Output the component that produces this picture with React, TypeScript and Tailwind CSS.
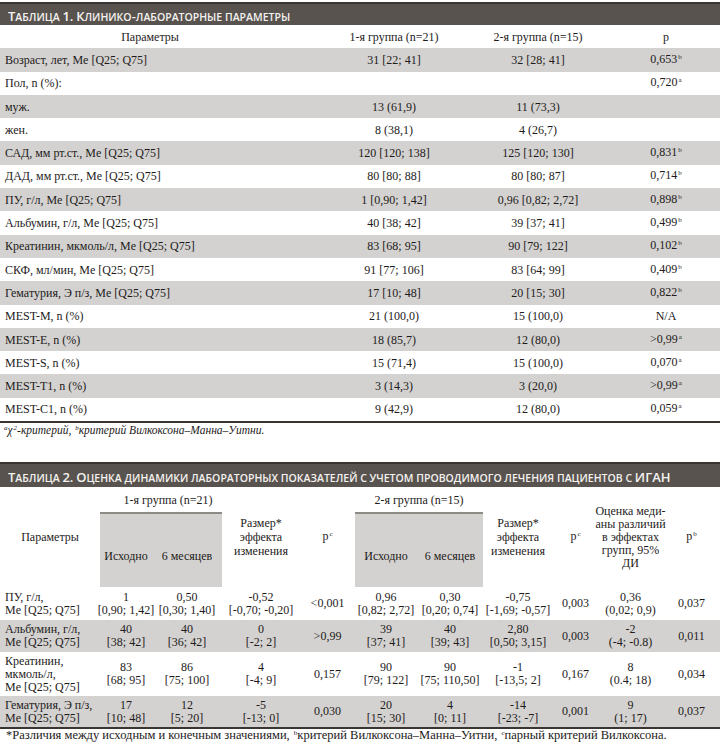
import React from "react";

const serif = "font-['Liberation_Serif',_'Times_New_Roman',serif]";

function SmallCaps({ text }: { text: string }) {
  const parts: { big: boolean; s: string }[] = [];
  for (const ch of text) {
    const isLower = ch !== ch.toUpperCase();
    const big = !isLower && ch !== " ";
    const last = parts[parts.length - 1];
    if (last && last.big === big) last.s += ch;
    else parts.push({ big, s: ch });
  }
  return (
    <span>
      {parts.map((p, i) =>
        p.big ? (
          <span key={i} className="text-[13px]">{p.s}</span>
        ) : (
          <span key={i} className="text-[10.5px]">{p.s.toUpperCase()}</span>
        )
      )}
    </span>
  );
}

function TitleBar({ text, h }: { text: string; h: string }) {
  return (
    <div className={`${h} bg-[#58534e] border-t-[2px] border-[#3a3531] flex items-center pl-[8px] text-[#f4f2f0] font-['Open_Sans',sans-serif] font-semibold tracking-[0px] leading-none whitespace-pre`}>
      <SmallCaps text={text} />
    </div>
  );
}

const Sup = ({ c }: { c: string }) => (
  <span className="text-[7px] relative top-[-4px] ml-[1px]">{c}</span>
);

type Row1 = [string, string, string, string, string?];
const rows1: Row1[] = [
  ["Возраст, лет, Me [Q25; Q75]", "31 [22; 41]", "32 [28; 41]", "0,653", "b"],
  ["Пол, n (%):", "", "", "0,720", "a"],
  ["муж.", "13 (61,9)", "11 (73,3)", ""],
  ["жен.", "8 (38,1)", "4 (26,7)", ""],
  ["САД, мм рт.ст., Me [Q25; Q75]", "120 [120; 138]", "125 [120; 130]", "0,831", "b"],
  ["ДАД, мм рт.ст., Me [Q25; Q75]", "80 [80; 88]", "80 [80; 87]", "0,714", "b"],
  ["ПУ, г/л, Me [Q25; Q75]", "1 [0,90; 1,42]", "0,96 [0,82; 2,72]", "0,898", "b"],
  ["Альбумин, г/л, Me [Q25; Q75]", "40 [38; 42]", "39 [37; 41]", "0,499", "b"],
  ["Креатинин, мкмоль/л, Me [Q25; Q75]", "83 [68; 95]", "90 [79; 122]", "0,102", "b"],
  ["СКФ, мл/мин, Me [Q25; Q75]", "91 [77; 106]", "83 [64; 99]", "0,409", "b"],
  ["Гематурия, Э п/з, Me [Q25; Q75]", "17 [10; 48]", "20 [15; 30]", "0,822", "b"],
  ["MEST-M, n (%)", "21 (100,0)", "15 (100,0)", "N/A"],
  ["MEST-E, n (%)", "18 (85,7)", "12 (80,0)", ">0,99", "a"],
  ["MEST-S, n (%)", "15 (71,4)", "15 (100,0)", "0,070", "a"],
  ["MEST-T1, n (%)", "3 (14,3)", "3 (20,0)", ">0,99", "a"],
  ["MEST-C1, n (%)", "9 (42,9)", "12 (80,0)", "0,059", "a"],
];

type Row2 = { label: string[]; cells: [string, string][]; h: string; gray: boolean };
const rows2: Row2[] = [
  {
    label: ["ПУ, г/л,", "Me [Q25; Q75]"],
    cells: [
      ["1", "[0,90; 1,42]"],
      ["0,50", "[0,30; 1,40]"],
      ["-0,52", "[-0,70; -0,20]"],
      ["<0,001", ""],
      ["0,96", "[0,82; 2,72]"],
      ["0,30", "[0,20; 0,74]"],
      ["-0,75", "[-1,69; -0,57]"],
      ["0,003", ""],
      ["0,36", "(0,02; 0,9)"],
      ["0,037", ""],
    ],
    h: "h-[33px]",
    gray: false,
  },
  {
    label: ["Альбумин, г/л,", "Me [Q25; Q75]"],
    cells: [
      ["40", "[38; 42]"],
      ["40", "[36; 42]"],
      ["0", "[-2; 2]"],
      [">0,99", ""],
      ["39", "[37; 41]"],
      ["40", "[39; 43]"],
      ["2,80", "[0,50; 3,15]"],
      ["0,003", ""],
      ["-2", "(-4; -0.8)"],
      ["0,011", ""],
    ],
    h: "h-[32px]",
    gray: true,
  },
  {
    label: ["Креатинин,", "мкмоль/л,", "Me [Q25; Q75]"],
    cells: [
      ["83", "[68; 95]"],
      ["86", "[75; 100]"],
      ["4", "[-4; 9]"],
      ["0,157", ""],
      ["90", "[79; 122]"],
      ["90", "[75; 110,50]"],
      ["-1", "[-13,5; 2]"],
      ["0,167", ""],
      ["8", "(0.4; 18)"],
      ["0,034", ""],
    ],
    h: "h-[44px]",
    gray: false,
  },
  {
    label: ["Гематурия, Э п/з,", "Me [Q25; Q75]"],
    cells: [
      ["17", "[10; 48]"],
      ["12", "[5; 20]"],
      ["-5", "[-13; 0]"],
      ["0,030", ""],
      ["20", "[15; 30]"],
      ["4", "[0; 11]"],
      ["-14", "[-23; -7]"],
      ["0,001", ""],
      ["9", "(1; 17)"],
      ["0,037", ""],
    ],
    h: "h-[31px]",
    gray: true,
  },
];

const cols2 = "grid grid-cols-[100px_52px_70px_78px_55px_62px_66px_70px_45px_65px_57px]";

export default function App() {
  return (
    <div className={`w-[720px] h-[744px] bg-white overflow-hidden text-[#1e1b1a] ${serif}`}>
      {/* Table 1 */}
      <div className="pt-[2px]">
        <TitleBar h="h-[23px]" text="Таблица 1. Клинико-лабораторные параметры" />
        <div className="text-[12px] leading-[14px]">
          <div className="grid grid-cols-[300px_188px_100px_132px] h-[23.3px] items-center">
            <div className="text-center">Параметры</div>
            <div className="text-center">1-я группа (n=21)</div>
            <div className="text-center">2-я группа (n=15)</div>
            <div className="text-center pl-[24px]">p</div>
          </div>
          {rows1.map((r, i) => (
            <div
              key={i}
              className={`grid grid-cols-[300px_188px_100px_132px] h-[23.3px] items-center ${i % 2 === 0 ? "bg-[#d3d2d0]" : ""}`}
            >
              <div className="pl-[5px] whitespace-nowrap">{r[0]}</div>
              <div className="text-center">{r[1]}</div>
              <div className="text-center">{r[2]}</div>
              <div className="text-center pl-[24px]">
                {r[3]}
                {r[4] ? <Sup c={r[4]} /> : null}
              </div>
            </div>
          ))}
          <div className="h-[2px] bg-[#3a3531]" />
        </div>
        <div className="h-[15px] flex items-center pl-[3px] text-[11.5px] italic whitespace-pre">
          <span>
            <Sup c="a" />χ<Sup c="2" />-критерий, <Sup c="b" />критерий Вилкоксона–Манна–Уитни.
          </span>
        </div>
      </div>

      {/* Table 2 */}
      <div className="mt-[24px]">
        <TitleBar h="h-[25px]" text="Таблица 2. Оценка динамики лабораторных показателей с учетом проводимого лечения пациентов с ИГАН" />
        <div className="text-[12px] leading-[13px]">
          <div className={`${cols2} grid-rows-[25px_75px]`}>
            <div className="row-span-2 flex items-center justify-center">Параметры</div>
            <div className="col-span-2 flex items-center justify-center pl-[14px] pt-[2px]">1-я группа (n=21)</div>
            <div className="row-span-2 flex items-center justify-center text-center leading-[14px]">
              <span>
                Размер*
                <br />
                эффекта
                <br />
                изменения
              </span>
            </div>
            <div className="row-span-2 flex items-center justify-center">
              <span>
                p<Sup c="c" />
              </span>
            </div>
            <div className="col-span-2 flex items-center justify-center pt-[2px]">2-я группа (n=15)</div>
            <div className="row-span-2 flex items-center justify-center text-center leading-[14px]">
              <span>
                Размер*
                <br />
                эффекта
                <br />
                изменения
              </span>
            </div>
            <div className="row-span-2 flex items-center justify-center">
              <span>
                p<Sup c="c" />
              </span>
            </div>
            <div className="row-span-2 flex items-center justify-center text-center whitespace-nowrap">
              <span>
                Оценка меди-
                <br />
                аны различий
                <br />в эффектах
                <br />
                групп, 95%
                <br />
                ДИ
              </span>
            </div>
            <div className="row-span-2 flex items-center justify-center">
              <span>
                p<Sup c="b" />
              </span>
            </div>
            <div className="col-span-2 bg-[#d3d2d0] border-t-[2px] border-[#8e8a86] grid grid-cols-[52px_70px] items-center pt-[12px]">
              <div className="text-center">Исходно</div>
              <div className="text-center">6 месяцев</div>
            </div>
            <div className="col-span-2 bg-[#d3d2d0] border-t-[2px] border-[#8e8a86] grid grid-cols-[62px_66px] items-center pt-[12px]">
              <div className="text-center">Исходно</div>
              <div className="text-center">6 месяцев</div>
            </div>
          </div>
          {rows2.map((r, i) => (
            <div key={i} className={`${cols2} ${r.h} ${r.gray ? "bg-[#d3d2d0]" : ""}`}>
              <div className="pl-[5px] flex flex-col justify-center whitespace-nowrap">
                {r.label.map((l, j) => (
                  <div key={j}>{l}</div>
                ))}
              </div>
              {r.cells.map((c, j) => (
                <div key={j} className="flex flex-col justify-center items-center whitespace-nowrap">
                  <div>{c[0]}</div>
                  {c[1] ? <div>{c[1]}</div> : null}
                </div>
              ))}
            </div>
          ))}
          <div className="h-[2px] bg-[#3a3531]" />
        </div>
        <div className="h-[13px] flex items-center pl-[6px] text-[12.5px] whitespace-pre">
          <span>
            *Различия между исходным и конечным значениями, <Sup c="b" />критерий Вилкоксона–Манна–Уитни, <Sup c="c" />парный критерий Вилкоксона.
          </span>
        </div>
      </div>
    </div>
  );
}
